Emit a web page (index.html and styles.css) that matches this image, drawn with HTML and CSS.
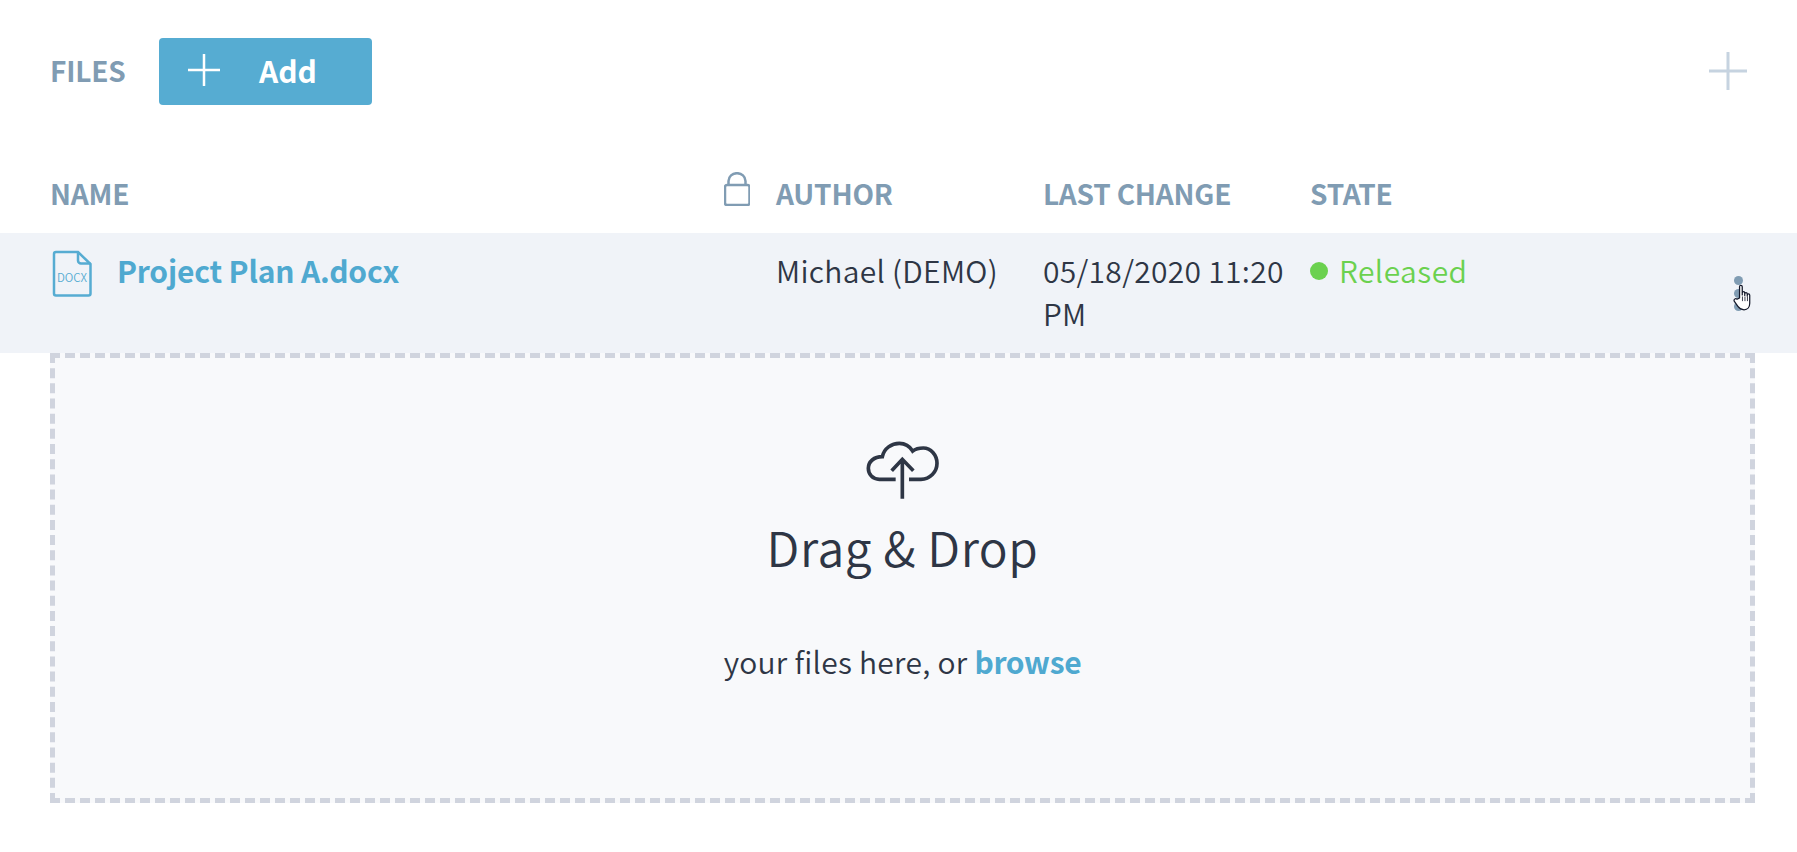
FILE: index.html
```html
<!DOCTYPE html>
<html lang="en">
<head>
<meta charset="utf-8">
<title>Files</title>
<link rel="stylesheet" href="styles.css">
</head>
<body>
<main class="page">
  <header class="toolbar">
    <h2 class="label toolbar-title">FILES</h2>
    <button class="add-btn" type="button">
      <svg class="add-icon" width="32" height="32" viewBox="0 0 32 32"><path d="M16 0.5V31.5M0.5 16H31.5"/></svg>
      <span>Add</span>
    </button>
    <svg class="corner-plus" width="38" height="38" viewBox="0 0 38 38"><path d="M19 0.5V37.5M0.5 19H37.5"/></svg>
  </header>

  <div class="grid head">
    <div class="label">NAME</div>
    <div class="lock-cell">
      <svg width="26" height="34" viewBox="0 0 26 34"><path d="M4.500 13V9C4.500 4.500 8.500 1.200 13 1.200S21.500 4.500 21.500 9V13"/><rect x="1" y="13" width="24.500" height="20" rx="2"/></svg>
    </div>
    <div class="label">AUTHOR</div>
    <div class="label">LAST CHANGE</div>
    <div class="label">STATE</div>
  </div>

  <div class="grid row">
    <div class="name-cell">
      <svg class="file-icon" width="40" height="47" viewBox="0 0 40 47">
        <path d="M4 2H26L38.500 14V43.500A2 2 0 0 1 36.500 45.500H4A2 2 0 0 1 2 43.500V4A2 2 0 0 1 4 2Z"/>
        <path d="M26 2V10.500A3 3 0 0 0 29 13.500H38.500"/>
        <text x="20" y="32" text-anchor="middle">DOCX</text>
      </svg>
      <a class="file-link" href="#">Project Plan A.docx</a>
    </div>
    <div></div>
    <div>Michael (DEMO)</div>
    <div>05/18/2020 11:20 PM</div>
    <div class="state"><span class="state-dot"></span>Released</div>
    <div class="dots"><i></i><i></i><i></i></div>
    <svg class="hand" width="21" height="27" viewBox="0 0 20 26">
      <path d="M6.200 13.500V2.600C6.200 .8 8.800 .8 8.800 2.600V10.500V8.600C8.800 7 11.200 7 11.200 8.600V11V9.600C11.200 8 13.600 8 13.600 9.600V11.600V10.600C13.600 9.200 16 9.200 16 10.800V18.500C16 22 14 24.800 10.500 24.800C7.500 24.800 6 23.600 4.600 21.600L1.200 16.800C.2 15 2.200 13.400 3.800 14.600Z"/>
      <path class="finger" d="M9 12V16.500M11.400 12V16.500M13.800 12V16.500"/>
    </svg>
  </div>

  <section class="dropzone">
    <svg class="cloud" width="75" height="60" viewBox="75 60 225 180">
      <path d="M167 178H118C98 178 85 163 85 145C85 125 102 110 127 110C132 85 155 70 178 70C197 70 210 80 218 93C226 87 238 84 250 84C272 84 291 104 291 130C291 156 270 178 243 178H207"/>
      <path d="M187 236V118M155 152L187 118L220 152"/>
    </svg>
    <div class="drop-title">Drag &amp; Drop</div>
    <div class="drop-sub">your files here, or <a class="browse" href="#">browse</a></div>
  </section>
</main>
</body>
</html>
```
FILE: styles.css
```css
* { box-sizing: border-box; }
html, body { margin: 0; background: #fff; }
body {
  font-family: "Noto Sans CJK SC", "Noto Sans", sans-serif;
  font-size: 30px;
  font-weight: 350;
  color: #2e3645;
  overflow: hidden;
}
.page { width: 1797px; height: 852px; }
.label {
  margin: 0;
  font-size: 28px;
  font-weight: 700;
  letter-spacing: -0.2px;
  color: #809cb3;
  line-height: 44px;
}
.toolbar {
  display: flex;
  align-items: center;
  height: 67px;
  margin-top: 38px;
  padding-left: 50px;
  padding-right: 50px;
}
.toolbar-title { width: 109px; margin-bottom: 3px; }
.add-btn {
  display: flex;
  align-items: center;
  width: 213px;
  height: 67px;
  padding: 0 0 3px 29px;
  background: #56acd2;
  border: 0;
  border-radius: 4px;
  color: #fff;
  font: 700 30px "Noto Sans CJK SC", "Noto Sans", sans-serif;
}
.add-icon { margin-right: 39px; }
.add-icon path { stroke: #fff; stroke-width: 2.5; stroke-linecap: round; fill: none; }
.corner-plus { margin-left: auto; margin-bottom: 2px; }
.corner-plus path { stroke: #c6d3e0; stroke-width: 3; stroke-linecap: round; fill: none; }
.grid {
  display: grid;
  grid-template-columns: 674px 52px 267px 267px 1fr;
  padding-left: 50px;
}
.head { height: 128px; padding-bottom: 18px; align-items: end; }
.lock-cell svg { display: block; margin-bottom: 9px; }
.lock-cell path, .lock-cell rect { stroke: #809cb3; stroke-width: 2.5; fill: none; }
.row {
  position: relative;
  height: 120px;
  background: #f0f3f8;
  padding-top: 16px;
  line-height: 43px;
  letter-spacing: 0.3px;
}
.name-cell { display: flex; align-items: flex-start; }
.file-icon { flex: none; margin: 1px 25px 0 2px; }
.file-icon path { stroke: #56acd2; stroke-width: 2.5; fill: none; }
.file-icon text { fill: #56acd2; font-size: 11.5px; letter-spacing: 0; }
.file-link { color: #4fa9d0; font-weight: 700; letter-spacing: -0.18px; text-decoration: none; }
.state { display: flex; align-items: center; height: 43px; color: #6bd14f; letter-spacing: 0.45px; }
.state-dot { width: 18px; height: 18px; margin-right: 11px; border-radius: 50%; background: #6bd14f; }
.dots {
  position: absolute;
  left: 1734px;
  top: 43px;
  display: flex;
  flex-direction: column;
  gap: 4px;
}
.dots i { display: block; width: 9px; height: 9px; border-radius: 50%; background: #809cb3; }
.hand { position: absolute; left: 1733px; top: 51px; }
.hand path { fill: #fff; stroke: #14182a; stroke-width: 1.2; stroke-linejoin: round; }
.hand .finger { fill: none; stroke-width: 0.8; }
.dropzone {
  width: 1705px;
  height: 450px;
  margin-left: 50px;
  border: 5px dashed #d0d4de;
  background: #f8f9fb;
  text-align: center;
}
.cloud { display: block; margin: 82px auto 0; }
.cloud path { stroke: #2e3645; stroke-width: 11; fill: none; }
.drop-title { font-size: 48px; letter-spacing: 0.55px; line-height: 64px; margin-top: 14px; }
.drop-sub { letter-spacing: 0.27px; line-height: 44px; margin-top: 61px; }
.browse { color: #4fa9d0; font-weight: 700; letter-spacing: -0.3px; text-decoration: none; }
```
